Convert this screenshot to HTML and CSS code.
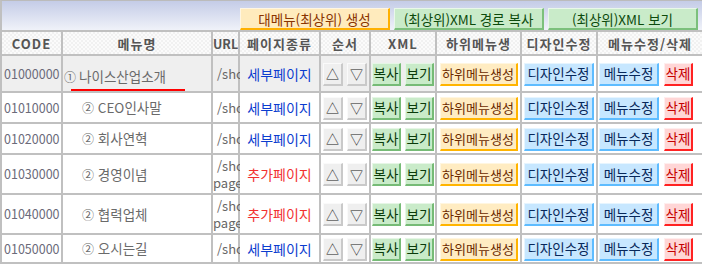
FILE: index.html
```html
<!DOCTYPE html>
<html lang="ko">
<head>
    <meta charset="UTF-8">
    <title>메뉴 관리</title>
    <link rel="stylesheet" href="styles.css">
</head>
<body>
    <div class="page">
        <div class="topbar">
            <button class="tbtn tbtn-yellow">대메뉴(최상위) 생성</button>
            <button class="tbtn tbtn-green">(최상위)XML 경로 복사</button>
            <button class="tbtn tbtn-green">(최상위)XML 보기</button>
        </div>

        <table class="menu-table">
            <colgroup>
                <col class="c-code">
                <col class="c-name">
                <col class="c-url">
                <col class="c-type">
                <col class="c-order">
                <col class="c-xml">
                <col class="c-sub">
                <col class="c-design">
                <col class="c-edit">
            </colgroup>
            <thead>
                <tr>
                    <th><div class="hcell">CODE</div></th>
                    <th><div class="hcell">메뉴명</div></th>
                    <th><div class="hcell tight">URL</div></th>
                    <th><div class="hcell">페이지종류</div></th>
                    <th><div class="hcell">순서</div></th>
                    <th><div class="hcell">XML</div></th>
                    <th><div class="hcell">하위메뉴생성</div></th>
                    <th><div class="hcell">디자인수정</div></th>
                    <th><div class="hcell">메뉴수정/삭제</div></th>
                </tr>
            </thead>
            <tbody>
                <tr class="current first">
                    <td class="code">01000000</td>
                    <td class="name"><span class="num">①</span> <span class="active">나이스산업소개</span></td>
                    <td><div class="url"><span class="u1">/shop</span></div></td>
                    <td class="type sub">세부페이지</td>
                    <td><div class="btns"><button class="btn gray w-arrow">△</button><button class="btn gray w-arrow">▽</button></div></td>
                    <td><div class="btns"><button class="btn green w-2">복사</button><button class="btn green w-2">보기</button></div></td>
                    <td><div class="btns"><button class="btn yellow w-6">하위메뉴생성</button></div></td>
                    <td><div class="btns"><button class="btn blue w-5">디자인수정</button></div></td>
                    <td><div class="btns left"><button class="btn blue w-4">메뉴수정</button><button class="btn red w-2">삭제</button></div></td>
                </tr>
                <tr>
                    <td class="code">01010000</td>
                    <td class="name lv2"><span class="num">②</span> CEO인사말</td>
                    <td><div class="url"><span class="u1">/shop</span></div></td>
                    <td class="type sub">세부페이지</td>
                    <td><div class="btns"><button class="btn gray w-arrow">△</button><button class="btn gray w-arrow">▽</button></div></td>
                    <td><div class="btns"><button class="btn green w-2">복사</button><button class="btn green w-2">보기</button></div></td>
                    <td><div class="btns"><button class="btn yellow w-6">하위메뉴생성</button></div></td>
                    <td><div class="btns"><button class="btn blue w-5">디자인수정</button></div></td>
                    <td><div class="btns left"><button class="btn blue w-4">메뉴수정</button><button class="btn red w-2">삭제</button></div></td>
                </tr>
                <tr>
                    <td class="code">01020000</td>
                    <td class="name lv2"><span class="num">②</span> 회사연혁</td>
                    <td><div class="url"><span class="u1">/shop</span></div></td>
                    <td class="type sub">세부페이지</td>
                    <td><div class="btns"><button class="btn gray w-arrow">△</button><button class="btn gray w-arrow">▽</button></div></td>
                    <td><div class="btns"><button class="btn green w-2">복사</button><button class="btn green w-2">보기</button></div></td>
                    <td><div class="btns"><button class="btn yellow w-6">하위메뉴생성</button></div></td>
                    <td><div class="btns"><button class="btn blue w-5">디자인수정</button></div></td>
                    <td><div class="btns left"><button class="btn blue w-4">메뉴수정</button><button class="btn red w-2">삭제</button></div></td>
                </tr>
                <tr class="tall">
                    <td class="code">01030000</td>
                    <td class="name lv2"><span class="num">②</span> 경영이념</td>
                    <td><div class="url"><span class="u1">/shop</span><span class="u2">page</span></div></td>
                    <td class="type add">추가페이지</td>
                    <td><div class="btns"><button class="btn gray w-arrow">△</button><button class="btn gray w-arrow">▽</button></div></td>
                    <td><div class="btns"><button class="btn green w-2">복사</button><button class="btn green w-2">보기</button></div></td>
                    <td><div class="btns"><button class="btn yellow w-6">하위메뉴생성</button></div></td>
                    <td><div class="btns"><button class="btn blue w-5">디자인수정</button></div></td>
                    <td><div class="btns left"><button class="btn blue w-4">메뉴수정</button><button class="btn red w-2">삭제</button></div></td>
                </tr>
                <tr class="tall">
                    <td class="code">01040000</td>
                    <td class="name lv2"><span class="num">②</span> 협력업체</td>
                    <td><div class="url"><span class="u1">/shop</span><span class="u2">page</span></div></td>
                    <td class="type add">추가페이지</td>
                    <td><div class="btns"><button class="btn gray w-arrow">△</button><button class="btn gray w-arrow">▽</button></div></td>
                    <td><div class="btns"><button class="btn green w-2">복사</button><button class="btn green w-2">보기</button></div></td>
                    <td><div class="btns"><button class="btn yellow w-6">하위메뉴생성</button></div></td>
                    <td><div class="btns"><button class="btn blue w-5">디자인수정</button></div></td>
                    <td><div class="btns left"><button class="btn blue w-4">메뉴수정</button><button class="btn red w-2">삭제</button></div></td>
                </tr>
                <tr class="last">
                    <td class="code">01050000</td>
                    <td class="name lv2"><span class="num">②</span> 오시는길</td>
                    <td><div class="url"><span class="u1">/shop</span></div></td>
                    <td class="type sub">세부페이지</td>
                    <td><div class="btns"><button class="btn gray w-arrow">△</button><button class="btn gray w-arrow">▽</button></div></td>
                    <td><div class="btns"><button class="btn green w-2">복사</button><button class="btn green w-2">보기</button></div></td>
                    <td><div class="btns"><button class="btn yellow w-6">하위메뉴생성</button></div></td>
                    <td><div class="btns"><button class="btn blue w-5">디자인수정</button></div></td>
                    <td><div class="btns left"><button class="btn blue w-4">메뉴수정</button><button class="btn red w-2">삭제</button></div></td>
                </tr>
            </tbody>
        </table>
    </div>
</body>
</html>
```

FILE: styles.css
```css
body {
    margin: 0;
    font-family: "Noto Sans CJK KR", "Noto Sans", sans-serif;
    font-size: 12px;
    color: #666;
    background: #fff;
}
.page {
    width: 702px;
}

/* top toolbar */
.topbar {
    height: 30px;
    border-top: 1px solid #bbb;
    border-left: 2px solid #c0c0c0;
    background: linear-gradient(#c4cce7, #f0f2f9);
    display: flex;
    justify-content: flex-end;
    gap: 4px;
    padding: 7px 4px 0 0;
    box-sizing: border-box;
}
.tbtn {
    width: 150px;
    height: 22px;
    padding: 0;
    font-family: inherit;
    font-size: 13.5px;
    line-height: 18px;
    border-style: solid;
    border-width: 1px 2px 2px 1px;
    cursor: pointer;
}
.tbtn-yellow {
    background: #ffebbd;
    border-color: #fff6e2 #ffb000 #ffb000 #fff6e2;
    color: #8a3300;
}
.tbtn-green {
    background: #c9ebc9;
    border-color: #e9f8e9 #7cc07c #7cc07c #e9f8e9;
    color: #0c4a0c;
}

/* table */
.menu-table {
    width: 702px;
    border-collapse: collapse;
    table-layout: fixed;
    border: 2px solid #c0c0c0;
}
.menu-table th,
.menu-table td {
    border: 2px solid #c0c0c0;
    padding: 0;
    vertical-align: middle;
}
.c-code { width: 61px; }
.c-name { width: 150px; }
.c-url { width: 27px; }
.c-type { width: 81px; }
.c-order { width: 50px; }
.c-xml { width: 66px; }
.c-sub { width: 85px; }
.c-design { width: 76px; }
.c-edit { width: 106px; }

.menu-table th {
    background: repeating-conic-gradient(#f1f1f1 0 25%, #fbfbfb 0 50%) 0 0 / 4px 4px;
    color: #555;
    font-size: 13px;
    font-weight: bold;
    letter-spacing: 1px;
}
.hcell {
    height: 22px;
    line-height: 18px;
    padding: 3px 3px 0;
    box-sizing: border-box;
    overflow: hidden;
    text-align: center;
}
.hcell.tight {
    padding: 3px 0 0;
    letter-spacing: 0;
    font-size: 12.5px;
}

.menu-table td {
    height: 29px;
    line-height: 18px;
}
.menu-table tr.first td {
    height: 30px;
}
.menu-table tr.tall td {
    height: 38px;
}
.menu-table tr.last td {
    height: 27px;
}
.menu-table tr.current td:nth-child(-n+6) {
    background: #efefef;
}

.menu-table td.code {
    font-size: 12.5px;
    color: #6b6b7a;
    padding-left: 2px;
}
.menu-table td.name {
    padding-left: 1px;
    color: #6a6a6a;
    font-size: 13.5px;
    white-space: nowrap;
}
.menu-table td.name.lv2 {
    padding-left: 19px;
}
.num {
    font-size: 12px;
}
.active {
    display: inline-block;
    width: 114px;
    box-sizing: border-box;
    padding: 5px 0 4px 8px;
    margin: 6px 0 0 -8px;
    border-bottom: 2px solid #f00;
}

.url {
    width: 27px;
    overflow: hidden;
    white-space: nowrap;
    font-size: 13px;
    line-height: 17px;
}
.url .u1 {
    display: block;
    padding-left: 4px;
}
.url .u2 {
    display: block;
}

.menu-table td.type {
    text-align: center;
    font-size: 14px;
}
.type.sub { color: #0b3ccf; }
.type.add { color: #f23030; }

/* row buttons */
.btns {
    display: flex;
    justify-content: center;
    gap: 4px;
    padding-top: 1px;
}
.btns.left {
    justify-content: flex-start;
    gap: 5px;
    padding-left: 1px;
}
.btn {
    height: 23px;
    padding: 0;
    font-family: inherit;
    font-size: 13.5px;
    line-height: 19px;
    white-space: nowrap;
    border-style: solid;
    border-width: 1px 2px 2px 1px;
    cursor: pointer;
}
.w-arrow { width: 20px; }
.w-2 { width: 29px; }
.w-4 { width: 60px; }
.w-5 { width: 70px; }
.w-6 { width: 78px; }

.btn.gray {
    background: #efefef;
    border-color: #fafafa #c9c9c9 #c9c9c9 #fafafa;
    color: #222;
    font-size: 13px;
}
.btn.green {
    background: #c9ebc9;
    border-color: #e6f6e6 #76bb76 #76bb76 #e6f6e6;
    color: #0a3a0a;
}
.btn.yellow {
    background: #ffecc2;
    border-color: #fff6e0 #ffb400 #ffb400 #fff6e0;
    color: #6b2a00;
    font-size: 13px;
}
.btn.blue {
    background: #c7e7ff;
    border-color: #e6f5ff #5ebcff #5ebcff #e6f5ff;
    color: #07275a;
}
.btn.red {
    background: #ffd6d6;
    border-color: #ffeeee #ff2222 #ff2222 #ffeeee;
    color: #c40000;
}
```
